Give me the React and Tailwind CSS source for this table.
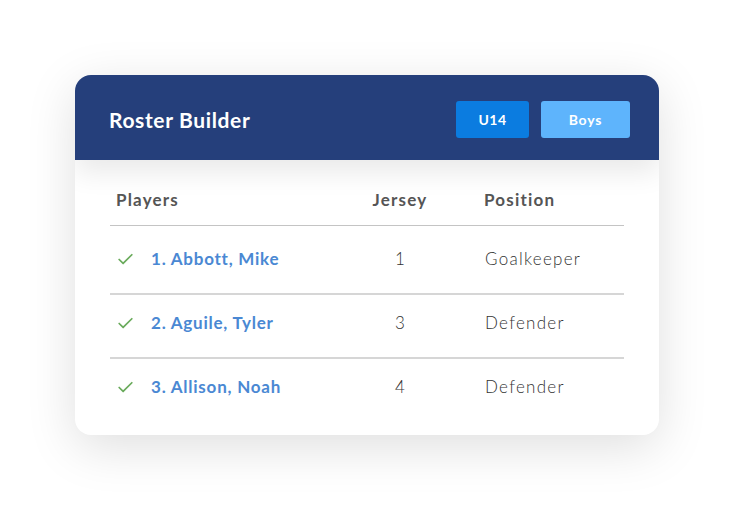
import { Check } from "lucide-react";

const PLAYERS = [
  { name: "1. Abbott, Mike", jersey: "1", position: "Goalkeeper" },
  { name: "2. Aguile, Tyler", jersey: "3", position: "Defender" },
  { name: "3. Allison, Noah", jersey: "4", position: "Defender" }
];

const FONT = "font-['Lato','Open_Sans',sans-serif]";

export default function App() {
  return (
    <div className={`min-h-[505px] w-full bg-white pt-[75px] ${FONT}`}>
      <div className="ml-[75px] w-[584px] overflow-hidden rounded-[16px] bg-white shadow-[0_12px_50px_rgba(0,0,0,0.13)]">
        <header className="relative z-10 flex h-[85px] items-center justify-between bg-[#253f7b] pt-[4px] pl-[34px] pr-[29px] shadow-[0_12px_26px_rgba(0,0,0,0.09)]">
          <h1 className="text-[21px] font-bold tracking-[0.03em] text-white">
            Roster Builder
          </h1>
          <div className="flex gap-3">
            <button className="h-[37px] w-[73px] rounded-[3px] bg-[#0b7ce0] text-[14px] font-bold tracking-[0.03em] text-white">
              U14
            </button>
            <button className="h-[37px] w-[89px] rounded-[3px] bg-[#5eb4fc] text-[14px] font-bold tracking-[0.06em] text-white">
              Boys
            </button>
          </div>
        </header>

        <section className="px-[35px] pt-[28px] pb-[13px]">
          <div className="grid grid-cols-[242px_96px_1fr] border-b border-[#c4c4c4] pb-[13px] text-[17px] leading-[24px] font-bold tracking-[0.07em] text-[#555]">
            <span className="pl-[6px]">Players</span>
            <span className="text-center">Jersey</span>
            <span className="pl-[36px]">Position</span>
          </div>

          {PLAYERS.map((player, i) => (
            <div
              key={player.name}
              className={`grid grid-cols-[242px_96px_1fr] items-center text-[17px] leading-[24px] ${
                i === 0
                  ? "pt-[21px] pb-[22px]"
                  : i === 1
                    ? "pt-[16px] pb-[22px]"
                    : "pt-[16px] pb-[23px]"
              } ${
                i < PLAYERS.length - 1 ? "border-b-2 border-[#d6d6d6]" : ""
              }`}
            >
              <span className="flex items-center gap-[16px] pl-[6px]">
                <Check
                  className="h-[19px] w-[19px] text-[#6aab5c]"
                  strokeWidth={2.2}
                />
                <span className="font-bold tracking-[0.045em] text-[#4a88d3]">
                  {player.name}
                </span>
              </span>
              <span className="text-center font-light text-[#333]">
                {player.jersey}
              </span>
              <span className="pl-[37px] font-light tracking-[0.075em] text-[#333]">
                {player.position}
              </span>
            </div>
          ))}
        </section>
      </div>
    </div>
  );
}
